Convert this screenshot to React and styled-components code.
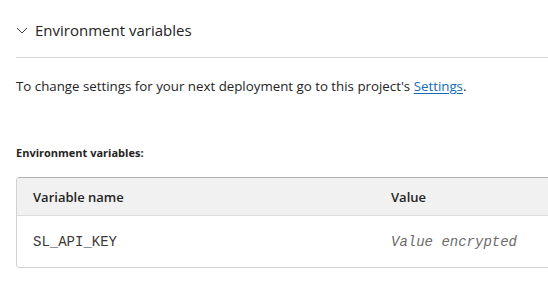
import React from "react";
import styled, { createGlobalStyle } from "styled-components";

const Global = createGlobalStyle`
  html, body { margin: 0; padding: 0; background: #ffffff; }
  body { overflow: hidden; font-family: "Open Sans", "Noto Sans", sans-serif; color: #242424; }
`;

const Page = styled.div`
  width: 548px;
  height: 290px;
  overflow: hidden;
  padding: 0 0 0 16px;
  box-sizing: border-box;
`;

const SectionHeader = styled.button`
  display: flex;
  align-items: center;
  gap: 7px;
  height: 58px;
  padding: 3px 0 0 0;
  margin: 0;
  border: none;
  border-bottom: 1px solid #d6d6d6;
  background: none;
  width: 100%;
  box-sizing: border-box;
  font-family: inherit;
  font-size: 15px;
  color: #242424;
  cursor: pointer;
`;

const Chevron = styled.svg`
  width: 12px;
  height: 12px;
  flex: none;
`;

const Note = styled.p`
  margin: 19px 0 0 0;
  font-size: 13.3px;
  line-height: 18px;
  color: #242424;
`;

const Link = styled.a`
  color: #0f6cbd;
  text-decoration: underline;
  text-underline-offset: 2px;
`;

const Label = styled.div`
  margin-top: 50px;
  font-size: 11px;
  font-weight: 700;
  line-height: 16px;
  color: #242424;
`;

const Table = styled.div`
  margin-top: 16px;
  width: 620px;
  border: 1px solid #d1d1d1;
  border-top-color: #b3b3b3;
  border-radius: 4px;
  overflow: hidden;
`;

const Row = styled.div`
  display: grid;
  grid-template-columns: 358px 1fr;
  align-items: center;
  height: ${(p) => (p.$head ? "37px" : "51px")};
  background: ${(p) => (p.$head ? "#f1f1f1" : "#ffffff")};
  border-bottom: ${(p) => (p.$head ? "1px solid #dcdcdc" : "none")};
  padding-left: 16px;
`;

const HeadCell = styled.div`
  font-size: 13px;
  font-weight: 600;
  color: #242424;
`;

const Cell = styled.div`
  font-family: "Liberation Mono", "Courier New", monospace;
  font-size: 14px;
  color: ${(p) => (p.$muted ? "#6b6b6b" : "#3a3a3a")};
  font-style: ${(p) => (p.$muted ? "italic" : "normal")};
`;

export default function App() {
  return (
    <>
      <Global />
      <Page>
        <SectionHeader>
          <Chevron viewBox="0 0 12 12" fill="none">
            <path d="M1 4 L6 9 L11 4" stroke="#424242" strokeWidth="1" />
          </Chevron>
          Environment variables
        </SectionHeader>
        <Note>
          To change settings for your next deployment go to this project's{" "}
          <Link href="#">Settings</Link>.
        </Note>
        <Label>Environment variables:</Label>
        <Table>
          <Row $head>
            <HeadCell>Variable name</HeadCell>
            <HeadCell>Value</HeadCell>
          </Row>
          <Row>
            <Cell>SL_API_KEY</Cell>
            <Cell $muted>Value encrypted</Cell>
          </Row>
        </Table>
      </Page>
    </>
  );
}
